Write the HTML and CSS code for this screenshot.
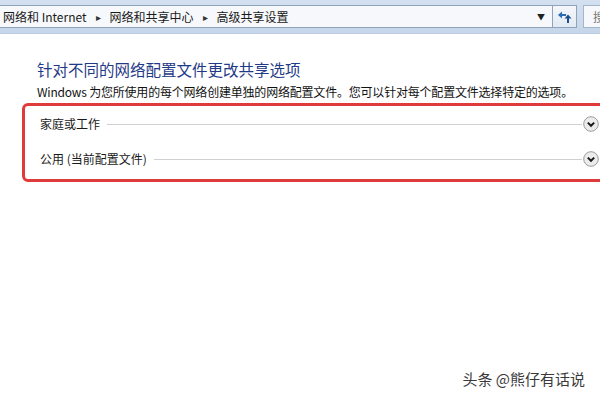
FILE: index.html
```html
<!DOCTYPE html>
<html lang="zh-CN">
<head>
    <meta charset="UTF-8">
    <title>高级共享设置</title>
    <link rel="stylesheet" href="styles.css">
</head>
<body>
    <div class="toolbar">
        <div class="address">
            <div class="crumbs">
                <span>网络和 Internet</span>
                <span class="sep">&#9656;</span>
                <span>网络和共享中心</span>
                <span class="sep">&#9656;</span>
                <span>高级共享设置</span>
            </div>
            <span class="drop">&#9660;</span>
        </div>
        <button class="refresh">
            <svg width="16" height="16" viewBox="0 0 16 16">
                <path d="M9 6 H3" stroke="#2a6db5" stroke-width="2" fill="none"/>
                <path d="M1 6 L5 2.5 L5 9.5 Z" fill="#2a6db5"/>
                <path d="M11 14 V8" stroke="#1d4f8f" stroke-width="2" fill="none"/>
                <path d="M11 5.5 L7.5 9.5 L14.5 9.5 Z" fill="#1d4f8f"/>
            </svg>
        </button>
        <div class="search">搜索</div>
    </div>

    <div class="content">
        <h1>针对不同的网络配置文件更改共享选项</h1>
        <p class="desc">Windows 为您所使用的每个网络创建单独的网络配置文件。您可以针对每个配置文件选择特定的选项。</p>

        <div class="profiles">
            <div class="profile">
                <span class="name">家庭或工作</span>
                <span class="rule"></span>
                <svg class="expand" width="16" height="16" viewBox="0 0 16 16">
                    <circle cx="8" cy="8" r="7.3" fill="#ececec" stroke="#9c9c9c" stroke-width="1"/>
                    <path d="M4.8 6.6 L8 9.8 L11.2 6.6" stroke="#1a1a1a" stroke-width="2" fill="none"/>
                </svg>
            </div>
            <div class="profile">
                <span class="name">公用 (当前配置文件)</span>
                <span class="rule"></span>
                <svg class="expand" width="16" height="16" viewBox="0 0 16 16">
                    <circle cx="8" cy="8" r="7.3" fill="#ececec" stroke="#9c9c9c" stroke-width="1"/>
                    <path d="M4.8 6.6 L8 9.8 L11.2 6.6" stroke="#1a1a1a" stroke-width="2" fill="none"/>
                </svg>
            </div>
        </div>
    </div>

    <div class="watermark">头条 @熊仔有话说</div>
</body>
</html>
```

FILE: styles.css
```css
/* Base */
* {
    margin: 0;
    padding: 0;
    box-sizing: border-box;
}

body {
    font-family: "Noto Sans CJK SC", "Noto Sans", sans-serif;
    color: #1a1a1a;
    background-color: #fff;
    width: 600px;
    height: 400px;
    overflow: hidden;
    position: relative;
}

/* Address bar */
.toolbar {
    display: flex;
    height: 34px;
    padding: 5px 0 5px 0;
    background: linear-gradient(#d3e0ef, #c6d6ea);
    border-bottom: 1px solid #b9cbe1;
}

.address {
    flex: 0 0 553px;
    display: flex;
    align-items: center;
    background-color: #f6f8fb;
    border: 1px solid #8fa3bd;
    border-left: none;
    padding-left: 3px;
}

.crumbs {
    flex: 1;
    display: flex;
    align-items: center;
    font-size: 12px;
    color: #1a1a1a;
    white-space: nowrap;
}

.crumbs .sep {
    font-size: 10px;
    color: #333;
    margin: 0 9px 0 9px;
}

.drop {
    font-size: 8px;
    color: #222;
    margin-right: 7px;
}

.refresh {
    flex: 0 0 24px;
    display: flex;
    align-items: center;
    justify-content: center;
    background: linear-gradient(#f4f7fb, #e3eaf3);
    border: 1px solid #8fa3bd;
    border-left: none;
}

.search {
    flex: 1;
    margin-left: 6px;
    padding-left: 9px;
    display: flex;
    align-items: center;
    background-color: #f6f8fb;
    border: 1px solid #a6b6ca;
    border-right: none;
    font-size: 12px;
    color: #777;
    white-space: nowrap;
    overflow: hidden;
}

/* Main content */
.content {
    padding-left: 22px;
}

.content h1 {
    margin-top: 25px;
    padding-left: 15px;
    font-size: 15.5px;
    line-height: 20px;
    font-weight: normal;
    color: #1f3a87;
}

.desc {
    margin-top: 5px;
    padding-left: 15px;
    font-size: 12px;
    line-height: 16px;
    letter-spacing: -0.2px;
    color: #111;
    white-space: nowrap;
}

/* Profiles (highlighted) */
.profiles {
    margin-top: 3px;
    margin-right: -25px;
    border: 3px solid #e03b3b;
    border-radius: 6px;
    padding: 0 23px 3px 15px;
}

.profile {
    display: flex;
    align-items: center;
    height: 35px;
}

.profile .name {
    font-size: 12px;
    color: #1a1a1a;
    white-space: nowrap;
}

.profile .rule {
    flex: 1;
    height: 1px;
    margin: 1px 1px 0 7px;
    background-color: #d0d0d0;
}

.expand {
    flex-shrink: 0;
}

/* Watermark */
.watermark {
    position: absolute;
    right: 15px;
    bottom: 11px;
    font-size: 15px;
    line-height: 20px;
    color: #3a3a3a;
    text-shadow: 0 0 2px #fff;
}
```
